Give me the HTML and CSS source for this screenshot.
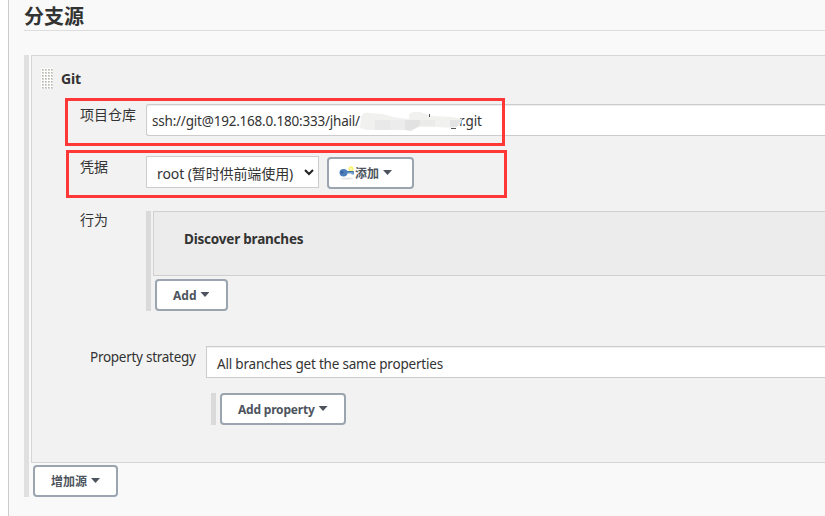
FILE: index.html
```html
<!DOCTYPE html>
<html lang="zh-CN">
<head>
<meta charset="utf-8">
<title>分支源</title>
<link rel="stylesheet" href="styles.css">
</head>
<body>
<main class="panel">
  <h1 class="heading">分支源</h1>
  <section class="repeat sources">
    <div class="source">
      <header class="source-head">
        <svg class="grip" width="12" height="21" viewBox="0 0 12 21" aria-hidden="true">
          <defs><pattern id="dots" width="3" height="3" patternUnits="userSpaceOnUse"><rect width="3" height="3" fill="#fff"/><rect x="1" y="1" width="2" height="2" fill="#d6d6d0"/><rect x="1" y="1" width="1" height="1" fill="#b4b4ac"/></pattern></defs>
          <rect width="12" height="21" fill="url(#dots)"/>
        </svg>
        <b>Git</b>
      </header>
      <div class="row repo">
        <label>项目仓库</label>
        <div class="field input">
          <span class="latin">ssh://git@192.168.0.180:333/jhail/</span><span class="latin t-end">r.git</span>
          <svg class="smudge" width="106" height="20" viewBox="0 0 106 20" aria-hidden="true">
            <path d="M2 5Q4 0 10 1L24 2L34 5L50 7V2Q56-2 64 1L74 4L93 5L103 7L101 13L94 16L78 15H61L53 18L46 18H8L1 16Z" fill="#f1f1f0"/>
            <path d="M16 8H31V18H16Z" fill="#e9e9e9"/><path d="M31 8H46V18H31Z" fill="#ececec"/><path d="M46 8H61V13L52 19L46 18Z" fill="#e2e2e2"/><path d="M61 8H76V14H61Z" fill="#ebebea"/><path d="M91 8H102L98 15H91Z" fill="#e4e4e4"/>
            <path d="M70.500 2V5M92 16.500H97" stroke="#555" fill="none"/>
          </svg>
        </div>
        <i class="mark mark-repo"></i>
      </div>
      <div class="row cred">
        <label>凭据</label>
        <div class="field select"><span>root (暂时供前端使用)</span>
          <svg class="chev" width="10" height="7" viewBox="0 0 10 7" aria-hidden="true"><path d="M1 1L5 5L9 1" fill="none" stroke="#222" stroke-width="2"/></svg>
        </div>
        <button class="btn btn-key" type="button">
          <svg class="key" width="16" height="14" viewBox="0 0 16 14" aria-hidden="true"><ellipse cx="8" cy="12.500" rx="6" ry="1" fill="#e4e4e4"/><circle cx="12" cy="2.800" r="2.500" fill="#fbf36a"/><circle cx="12" cy="2.800" r="1" fill="#fffbc8"/><path d="M5 5H15V8.500H12.500V7.500H5Z" fill="#6f9bcc"/><path d="M7 5.500H14.500" stroke="#4371a8"/><ellipse cx="4.500" cy="6.700" rx="4" ry="3.700" fill="#4b7dbb"/><circle cx="3" cy="6.200" r="1.200" fill="#315b96"/></svg>
          <span>添加</span><i class="caret"></i>
        </button>
        <i class="mark mark-cred"></i>
      </div>
      <div class="row behav">
        <label>行为</label>
        <div class="repeat traits">
          <div class="trait"><b class="latin">Discover branches</b></div>
          <button class="btn btn-add" type="button"><span>Add</span><i class="caret"></i></button>
        </div>
      </div>
      <div class="row strategy">
        <label class="latin">Property strategy</label>
        <div class="strategy-body">
          <div class="field select wide"><span class="latin">All branches get the same properties</span></div>
          <div class="repeat props">
            <button class="btn btn-prop" type="button"><span>Add property</span><i class="caret"></i></button>
          </div>
        </div>
      </div>
    </div>
    <button class="btn btn-source" type="button"><span>增加源</span><i class="caret"></i></button>
  </section>
</main>
</body>
</html>
```
FILE: styles.css
```css
* { box-sizing: border-box; }
body {
  margin: 0;
  height: 516px;
  overflow: hidden;
  background: #fff;
  color: #333;
  font: 14px/20px "Noto Sans", "Noto Sans CJK SC", sans-serif;
}
span, b, label { white-space: nowrap; }
.latin { font-size: 13.5px; letter-spacing: -.21px; }
.panel {
  margin-left: 8px;
  height: 516px;
  padding-left: 15px;
  border-left: 1px solid #ccc;
  background: #f9f9f9;
}
.heading {
  height: 31px;
  margin: 0 0 24px;
  padding-top: 3px;
  border-bottom: 1px solid #ddd;
  font-size: 20px;
  line-height: 28px;
}
.repeat { border-left: 5px solid #dadada; }
.sources { height: 442px; padding-left: 2px; border-color: #e0e0e0; }
.source {
  height: 408px;
  border: 1px solid #d6d6d6;
  border-right: 0;
  background: #f2f2f2;
}
.source-head { display: flex; height: 48px; padding: 12px 0 0 9px; gap: 8px; }
.source-head b { line-height: 22px; letter-spacing: -.2px; }
.row { display: flex; position: relative; }
.row > label { flex: none; width: 66px; }
.repo, .cred, .behav { padding-left: 48px; }
.repo { height: 52px; }
.cred { height: 55px; }
.behav { height: 135px; }
.field { position: relative; height: 32px; border: 1px solid #ccc; background: #fff; }
.input {
  flex: 1;
  display: flex;
  padding: 6px 0 0 5px;
  border-right: 0;
  border-radius: 3px 0 0 3px;
  box-shadow: inset 0 1px 1px rgba(0,0,0,.07);
}
.smudge { position: absolute; left: 212px; top: 7px; }
.t-end { position: absolute; left: 312px; }
.select { width: 173px; padding: 7px 0 0 10px; }
.select > span { letter-spacing: -.1px; }
.select > .latin { letter-spacing: -.2px; }
.cred .chev { position: absolute; right: 4px; top: 12px; }
.repo > label, .cred > label { padding-top: 1px; }
.mark { position: absolute; border: 3px solid #ff3737; pointer-events: none; }
.mark-repo { left: 33px; top: -6px; width: 440px; height: 48px; }
.mark-cred { left: 34px; top: -6px; width: 441px; height: 48px; }
.btn {
  display: flex;
  align-items: center;
  height: 32px;
  margin: 0;
  padding: 2px 0 0 16px;
  border: 2px solid #9aa5af;
  border-radius: 4px;
  background: #fff;
  color: #4d545d;
  font: bold 12px/20px "Noto Sans", "Noto Sans CJK SC", sans-serif;
}
.caret {
  width: 9px;
  height: 5px;
  margin: -3px 0 0 4px;
  background: currentColor;
  clip-path: polygon(0 0, 100% 0, 50% 100%);
}
.btn-key { width: 87px; margin: 1px 0 0 8px; padding-left: 10px; }
.key { flex: none; margin-top: -2px; }
.behav > label { margin-top: -1px; }
.traits { flex: 1; height: 100px; padding-left: 2px; }
.trait {
  height: 65px;
  margin-bottom: 3px;
  padding: 17px 0 0 30px;
  border: 1px solid #d0d0d0;
  border-right: 0;
  background: #ececec;
}
.btn-add { width: 73px; margin-left: 2px; }
.strategy { padding-left: 58px; }
.strategy > label { width: 116px; padding-top: 1px; letter-spacing: -.27px; }
.strategy-body { flex: 1; }
.wide { width: auto; border-right: 0; box-shadow: inset 0 1px 1px rgba(0,0,0,.07); }
.props { height: 32px; margin: 15px 0 0 5px; padding-left: 4px; }
.btn-prop { width: 126px; }
.btn-prop span { letter-spacing: -.2px; }
.btn-source { width: 85px; margin: 2px 0 0 2px; }
```
